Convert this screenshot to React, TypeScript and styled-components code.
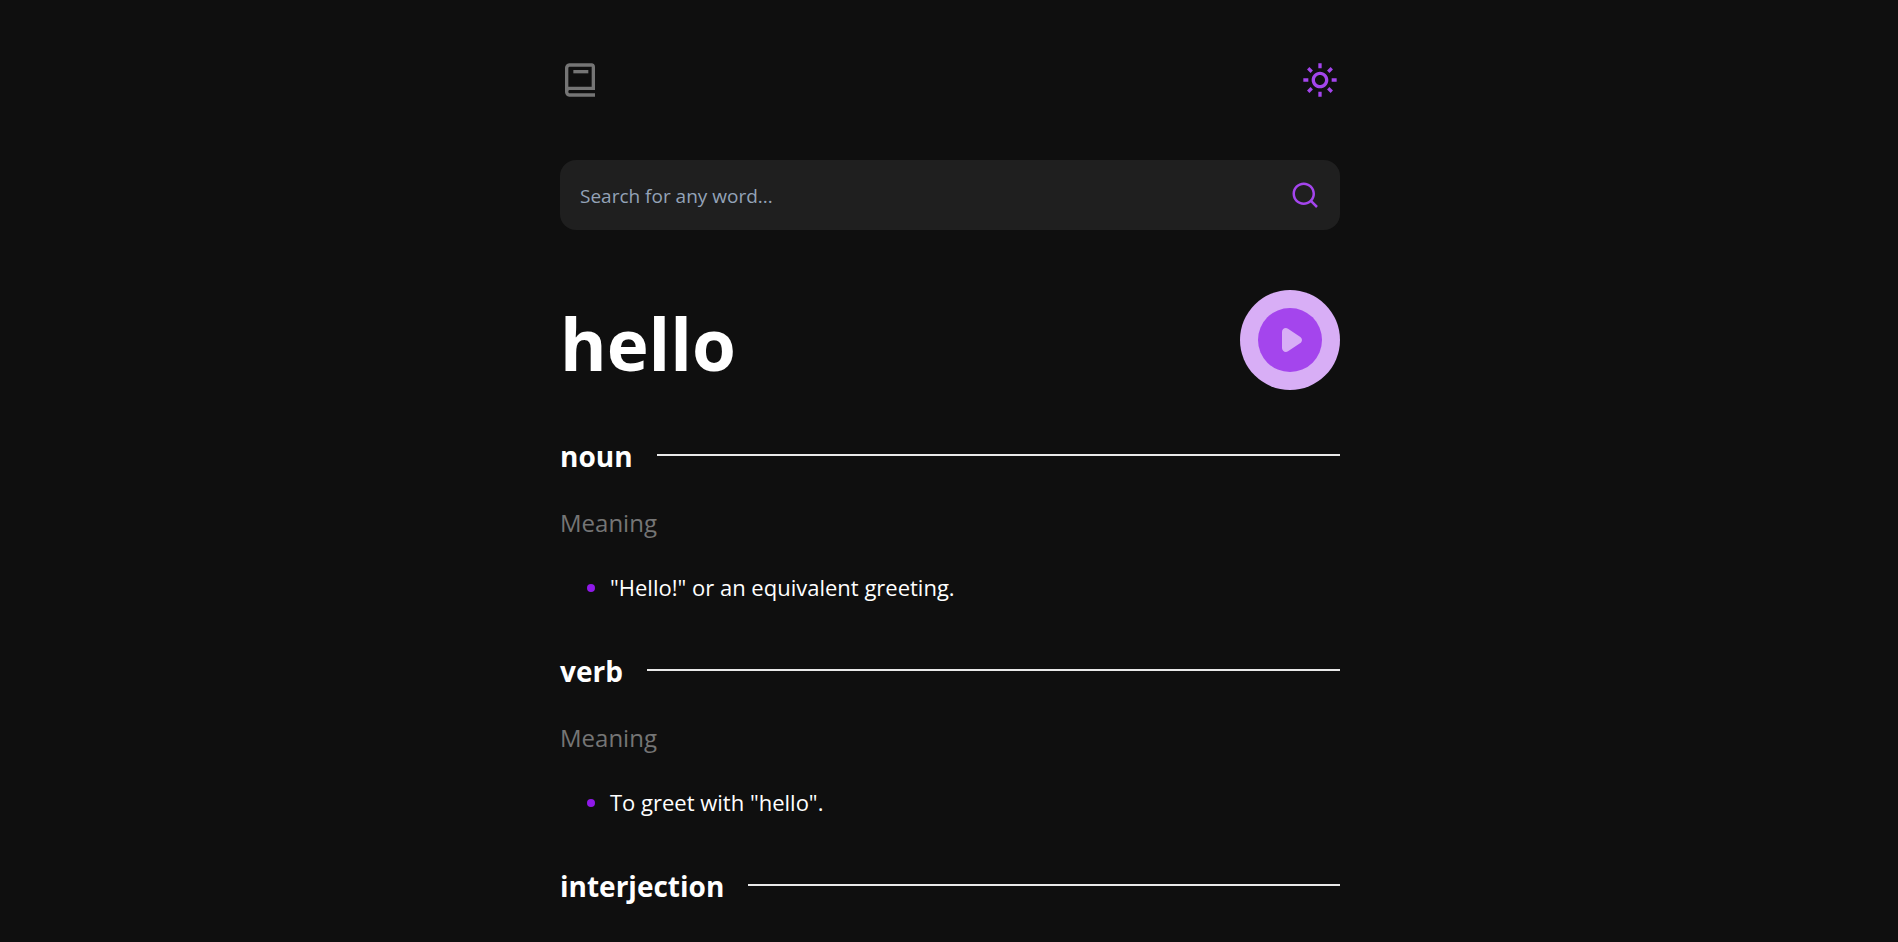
import React from 'react';
import styled, { createGlobalStyle } from 'styled-components';
import { BiBook, BiSun } from 'react-icons/bi';
import { RiSearchLine } from 'react-icons/ri';

const GlobalStyle = createGlobalStyle`
  * { box-sizing: border-box; margin: 0; padding: 0; }
  body {
    background: #0f0f0f;
    color: #ffffff;
    font-family: 'Segoe UI', 'Open Sans', 'Noto Sans', sans-serif;
  }
`;

const Page = styled.main`
  max-width: 822px;
  margin: 0 auto;
  padding: 60px 20px 20px 22px;
`;

const TopBar = styled.header`
  display: flex;
  align-items: center;
  justify-content: space-between;
  height: 40px;
`;

const IconButton = styled.button<{ $color: string }>`
  display: flex;
  border: 0;
  background: none;
  color: ${({ $color }) => $color};
  cursor: pointer;
`;

const SearchForm = styled.form`
  display: flex;
  align-items: center;
  margin-top: 60px;
  padding: 20px;
  border-radius: 16px;
  background: #1f1f1f;
`;

const SearchInput = styled.input`
  flex: 1;
  min-width: 0;
  height: 30px;
  padding-top: 2px;
  border: 0;
  outline: 0;
  background: transparent;
  color: #ffffff;
  font-family: inherit;
  font-size: 19px;

  &::placeholder {
    color: #94a3b8;
    opacity: 1;
  }
`;

const WordRow = styled.section`
  display: flex;
  align-items: center;
  justify-content: space-between;
  margin-top: 60px;
`;

const Word = styled.h1`
  padding-top: 8px;
  font-size: 71px;
  font-weight: 700;
  line-height: 92px;
`;

const PlayButton = styled.button`
  display: flex;
  align-items: center;
  justify-content: center;
  width: 100px;
  height: 100px;
  border: 0;
  border-radius: 50%;
  background: #d8aef6;
  color: #d8aef6;
  cursor: pointer;
`;

const PlayDisc = styled.span`
  display: flex;
  align-items: center;
  justify-content: center;
  width: 64px;
  height: 64px;
  padding-left: 4px;
  border-radius: 50%;
  background: #a445ed;
`;

const Entry = styled.section`
  margin-top: 43px;
`;

const EntryHeader = styled.div`
  display: flex;
  align-items: center;
  gap: 24px;
  height: 44px;
`;

const PartOfSpeech = styled.h2`
  padding-top: 2px;
  font-size: 28px;
  font-weight: 700;
  line-height: 40px;
`;

const Rule = styled.hr`
  flex: 1;
  height: 2px;
  border: 0;
  background: #e9e9e9;
`;

const MeaningTitle = styled.h3`
  margin-top: 29px;
  color: #757575;
  font-size: 24px;
  font-weight: 400;
  line-height: 34px;
`;

const Definitions = styled.ul`
  margin-top: 30px;
  padding-left: 50px;
  font-size: 22px;
  line-height: 35px;

  li::marker {
    color: #8f19e8;
  }
`;

const entries = [
  { part: 'noun', definitions: ['"Hello!" or an equivalent greeting.'] },
  { part: 'verb', definitions: ['To greet with "hello".'] },
  { part: 'interjection', definitions: [] as string[] },
];

const PlayIcon = () => (
  <svg width="20" height="24" viewBox="0 0 20 24" fill="currentColor" aria-hidden="true">
    <path d="M0 4v16c0 3.200 3.400 5 6 3.300l12-8c2.600-1.700 2.600-5 0-6.600l-12-8C3.400-1 0 .8 0 4z" />
  </svg>
);

export default function App() {
  return (
    <>
      <GlobalStyle />
      <Page>
        <TopBar>
          <IconButton type="button" $color="#757575" aria-label="Dictionary">
            <BiBook size={40} />
          </IconButton>
          <IconButton type="button" $color="#a445ed" aria-label="Toggle theme">
            <BiSun size={40} />
          </IconButton>
        </TopBar>
        <SearchForm onSubmit={(event) => event.preventDefault()}>
          <SearchInput type="text" placeholder="Search for any word..." aria-label="Search for any word" />
          <IconButton type="submit" $color="#a445ed" aria-label="Search">
            <RiSearchLine size={30} />
          </IconButton>
        </SearchForm>
        <WordRow>
          <Word>hello</Word>
          <PlayButton type="button" aria-label="Play pronunciation">
            <PlayDisc>
              <PlayIcon />
            </PlayDisc>
          </PlayButton>
        </WordRow>
        {entries.map(({ part, definitions }) => (
          <Entry key={part}>
            <EntryHeader>
              <PartOfSpeech>{part}</PartOfSpeech>
              <Rule />
            </EntryHeader>
            {definitions.length > 0 && (
              <>
                <MeaningTitle>Meaning</MeaningTitle>
                <Definitions>
                  {definitions.map((text) => (
                    <li key={text}>{text}</li>
                  ))}
                </Definitions>
              </>
            )}
          </Entry>
        ))}
      </Page>
    </>
  );
}
